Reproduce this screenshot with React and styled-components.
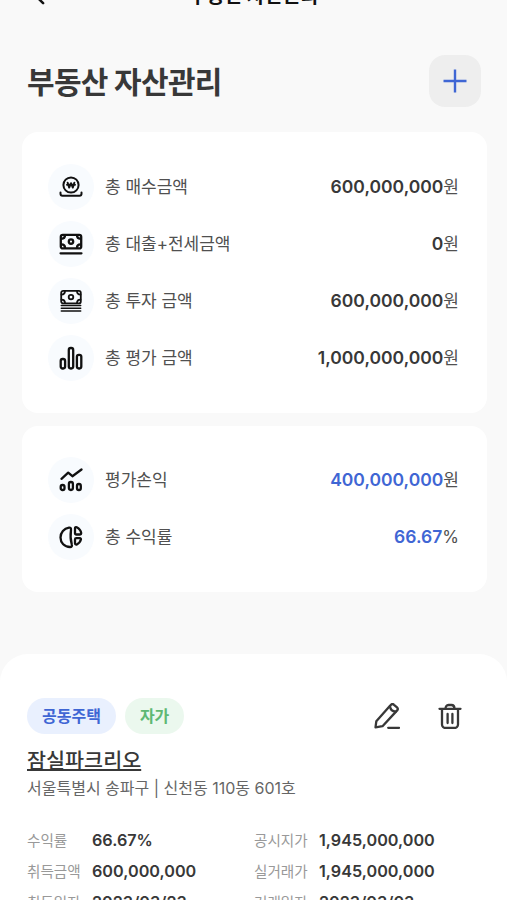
import React from "react";
import styled, { createGlobalStyle } from "styled-components";

const colors = {
  background: "#f9f9f9",
  text: "#383838",
  label: "#505050",
  blue: "#3f66d4",
  green: "#5fb873",
};

const summary = [
  { icon: "won", label: "총 매수금액", value: "600,000,000", unit: "원" },
  { icon: "loan", label: "총 대출+전세금액", value: "0", unit: "원" },
  { icon: "invest", label: "총 투자 금액", value: "600,000,000", unit: "원" },
  { icon: "bars", label: "총 평가 금액", value: "1,000,000,000", unit: "원" },
];

const profit = [
  { icon: "trend", label: "평가손익", value: "400,000,000", unit: "원" },
  { icon: "pie", label: "총 수익률", value: "66.67", unit: "%" },
];

const details = [
  ["수익률", "66.67%"],
  ["공시지가", "1,945,000,000"],
  ["취득금액", "600,000,000"],
  ["실거래가", "1,945,000,000"],
  ["취득일자", "2023/03/23"],
  ["거래일자", "2023/03/03"],
];

const icons = {
  won: (
    <>
      <circle cx="12" cy="10" r="7.600" strokeWidth="2" />
      <path d="M8.600 7.600l1.600 5L12 8.200l1.800 4.400 1.600-5M8 9.800h8" strokeWidth="1.900" />
      <path d="M1.500 17.500v1.200a2 2 0 0 0 2 2h17a2 2 0 0 0 2-2v-1.200" />
    </>
  ),
  loan: (
    <>
      <rect x="1.800" y="2.800" width="20.400" height="13.600" rx="2" strokeWidth="2.300" />
      <circle cx="12" cy="9.600" r="2.200" strokeWidth="2.300" />
      <path
        d="M2.500 6.800c2 0 3.500-1.500 3.500-3.500M21.500 6.800c-2 0-3.500-1.500-3.500-3.500M2.500 12.400c2 0 3.500 1.500 3.500 3.500M21.500 12.400c-2 0-3.500 1.500-3.500 3.500"
        strokeWidth="2.300"
      />
      <path d="M1.500 21.300h21" strokeWidth="2.200" />
    </>
  ),
  invest: (
    <g strokeWidth="1.800">
      <rect x="2.200" y="1.800" width="19.600" height="12.600" rx="2" />
      <circle cx="12" cy="8.100" r="2.300" />
      <path d="M2.500 5.600c2 0 3.500-1.500 3.500-3.500M21.500 5.600c-2 0-3.500-1.500-3.500-3.500M2.500 10.600c2 0 3.500 1.500 3.500 3.500M21.500 10.600c-2 0-3.500 1.500-3.500 3.500" />
      <path d="M2.300 16.500h19.400M2.300 19.300h19.400M2.300 22h19.400" strokeWidth="1.500" />
    </g>
  ),
  bars: (
    <g strokeWidth="2.300">
      <rect x="1.700" y="13" width="4.400" height="9.500" rx="1.900" />
      <rect x="9.800" y="2" width="4.400" height="20.500" rx="1.900" />
      <rect x="17.900" y="8.800" width="4.400" height="13.700" rx="1.900" />
    </g>
  ),
  trend: (
    <g strokeWidth="2.300">
      <path d="M2.500 10.800L9.200 4.600l4.200 3.600L22.500 1.500" />
      <rect x="1.700" y="17" width="3.800" height="5" rx="1.800" />
      <rect x="9.900" y="14" width="4" height="8" rx="1.900" />
      <rect x="18" y="16" width="3.800" height="6" rx="1.800" />
    </g>
  ),
  pie: (
    <g strokeWidth="2.300">
      <path d="M10 2.600C5 3.400 1.500 7.500 1.500 12.500c0 5.300 4 9.500 9.500 9.500 1.700 0 2.300-1 1.800-2.500-1.400-4.800-1.500-9.800-.8-14.700.2-1.500-.6-2.400-2-2.200z" />
      <path d="M16 3.300c0-1 .8-1.500 1.700-1.100 2.400 1.200 4.200 3.300 4.500 6 0 .8-.5 1.300-1.200 1.300h-3.700c-.8 0-1.300-.5-1.300-1.300z" />
      <path d="M16 14.500c0-.8.500-1.300 1.300-1.300h3.500c.9 0 1.300.7 1.100 1.400a7 7 0 0 1-4 4.800c-1.100.4-1.900-.1-1.900-1.100z" />
    </g>
  ),
};

const AssetRow = ({ icon, label, value, unit, highlight }) => (
  <Row>
    <IconCircle>
      <Icon viewBox="0 0 24 24">{icons[icon]}</Icon>
    </IconCircle>
    <RowLabel>{label}</RowLabel>
    <Amount $highlight={highlight}>
      {value}
      <Unit>{unit}</Unit>
    </Amount>
  </Row>
);

const App = () => {
  return (
    <Page>
      <GlobalStyle />
      <TopBar>
        <BackButton aria-label="back">
          <BackIcon viewBox="0 0 12 20">
            <path d="M10 2L2 10l8 8" />
          </BackIcon>
        </BackButton>
        <TopTitle>부동산 자산관리</TopTitle>
      </TopBar>

      <Heading>
        <Title>부동산 자산관리</Title>
        <AddButton aria-label="add">
          <AddIcon viewBox="0 0 24 24">
            <path d="M12 .5v23M.5 12h23" />
          </AddIcon>
        </AddButton>
      </Heading>

      <Cards>
        <Card>
          {summary.map((item) => (
            <AssetRow key={item.label} {...item} />
          ))}
        </Card>
        <Card>
          {profit.map((item) => (
            <AssetRow key={item.label} {...item} highlight />
          ))}
        </Card>
      </Cards>

      <Sheet>
        <SheetHeader>
          <Badge $color={colors.blue} $background="#e9f0fe">
            공동주택
          </Badge>
          <Badge $color={colors.green} $background="#ebf8ee">
            자가
          </Badge>
          <Actions>
            <ActionButton aria-label="edit">
              <ActionIcon viewBox="0 0 26 26">
                <path d="M1.500 24.300l.8-6L15.800 3l1.200-1.200a2.200 2.200 0 0 1 3 0l3 2.600a2.200 2.200 0 0 1 .2 3L22 8.600 8.500 23.200z" />
                <path d="M16 3.200c.2 3 2.200 5.200 5.800 5.500M14.200 24.800H25" />
              </ActionIcon>
            </ActionButton>
            <ActionButton aria-label="delete">
              <ActionIcon viewBox="0 0 26 26">
                <path d="M2.500 5.800h21M5 5.800v15.700a3.500 3.500 0 0 0 3.500 3.500h9a3.500 3.500 0 0 0 3.500-3.500V5.800M8.500 5.800c0-2.200 1-3.800 3-3.800h3c2 0 3 1.600 3 3.800M10.600 11v9M15.400 11v9" />
              </ActionIcon>
            </ActionButton>
          </Actions>
        </SheetHeader>
        <PropertyName href="#">잠실파크리오</PropertyName>
        <Address>서울특별시 송파구 | 신천동 110동 601호</Address>
        <Details>
          {details.map(([label, value]) => (
            <Detail key={label}>
              <DetailLabel>{label}</DetailLabel>
              <DetailValue>{value}</DetailValue>
            </Detail>
          ))}
        </Details>
      </Sheet>
    </Page>
  );
};

const GlobalStyle = createGlobalStyle`
  * {
    box-sizing: border-box;
  }

  body {
    margin: 0;
    font-family: Inter, "Noto Sans CJK KR", sans-serif;
    color: ${colors.text};
  }

  button {
    padding: 0;
    border: none;
    background: none;
  }
`;

const Page = styled.div`
  display: flex;
  flex-direction: column;
  height: 900px;
  overflow: hidden;
  background-color: ${colors.background};
`;

const TopBar = styled.header`
  display: grid;
  grid-template-columns: 60px 1fr 60px;
  align-items: center;
  flex-shrink: 0;
  height: 44px;
  margin-top: -26px;
  color: #111111;
`;

const BackButton = styled.button`
  display: flex;
  padding-left: 34px;
  color: inherit;
`;

const BackIcon = styled.svg`
  width: 11px;
  height: 18px;
  fill: none;
  stroke: currentColor;
  stroke-width: 2.8;
  stroke-linecap: round;
`;

const TopTitle = styled.div`
  font-size: 19.5px;
  font-weight: 700;
  line-height: 24px;
  letter-spacing: -0.1px;
  text-align: center;
`;

const Heading = styled.div`
  display: flex;
  align-items: center;
  justify-content: space-between;
  margin-top: 37px;
  padding: 0 26px 0 27px;
`;

const Title = styled.h1`
  margin: 0;
  padding-top: 1px;
  font-size: 30px;
  font-weight: 700;
  line-height: 40px;
  letter-spacing: -0.7px;
`;

const AddButton = styled.button`
  display: flex;
  align-items: center;
  justify-content: center;
  width: 52px;
  height: 52px;
  border-radius: 16px;
  background-color: #eeeeee;
  color: ${colors.blue};
`;

const AddIcon = styled.svg`
  width: 24px;
  height: 24px;
  fill: none;
  stroke: currentColor;
  stroke-width: 2.4;
`;

const Cards = styled.div`
  display: flex;
  flex-direction: column;
  gap: 13px;
  margin-top: 25px;
  padding: 0 20px 0 22px;
`;

const Card = styled.section`
  display: flex;
  flex-direction: column;
  gap: 11px;
  padding: 32px 28px 32px 26px;
  border-radius: 16px;
  background-color: #ffffff;

  & + & {
    padding-top: 31px;
  }
`;

const Row = styled.div`
  display: flex;
  align-items: center;
  height: 46px;
`;

const IconCircle = styled.div`
  display: flex;
  align-items: center;
  justify-content: center;
  width: 46px;
  height: 46px;
  margin-right: 11px;
  border-radius: 50%;
  background-color: #f8fbfe;
`;

const Icon = styled.svg`
  width: 24px;
  height: 24px;
  fill: none;
  stroke: #111111;
  stroke-width: 2;
  stroke-linecap: round;
  stroke-linejoin: round;
`;

const RowLabel = styled.span`
  color: ${colors.label};
  font-size: 17px;
  line-height: 24px;
`;

const Amount = styled.span`
  margin-left: auto;
  color: ${(props) => (props.$highlight ? colors.blue : colors.text)};
  font-size: 17.5px;
  font-weight: 600;
  line-height: 24px;
`;

const Unit = styled.span`
  color: ${colors.label};
  font-size: 17px;
  font-weight: 400;
`;

const Sheet = styled.section`
  flex: 1 0 auto;
  margin-top: 62px;
  padding: 44px 27px 0;
  border-radius: 28px 28px 0 0;
  background-color: #ffffff;
`;

const SheetHeader = styled.div`
  display: flex;
  align-items: center;
  gap: 9px;
  height: 36px;
`;

const Badge = styled.span`
  padding: 0 15px;
  border-radius: 18px;
  background-color: ${(props) => props.$background};
  color: ${(props) => props.$color};
  font-size: 16px;
  font-weight: 700;
  line-height: 36px;
`;

const Actions = styled.div`
  display: flex;
  gap: 37px;
  margin-left: auto;
  padding-right: 17px;
`;

const ActionButton = styled.button`
  display: flex;
  color: ${colors.text};
`;

const ActionIcon = styled.svg`
  width: 26px;
  height: 26px;
  fill: none;
  stroke: currentColor;
  stroke-width: 2.3;
  stroke-linecap: round;
  stroke-linejoin: round;
`;

const PropertyName = styled.a`
  display: block;
  width: fit-content;
  margin-top: 11px;
  color: ${colors.text};
  font-size: 20.7px;
  font-weight: 500;
  line-height: 32px;
  text-decoration: underline;
  text-decoration-thickness: 1.5px;
`;

const Address = styled.p`
  margin: 0;
  color: #666666;
  font-size: 16px;
  line-height: 22px;
`;

const Details = styled.div`
  display: grid;
  grid-template-columns: 227px 1fr;
  margin-top: 25px;
`;

const Detail = styled.div`
  display: flex;
  align-items: center;
  height: 31px;
`;

const DetailLabel = styled.span`
  width: 65px;
  color: #999999;
  font-size: 14.6px;
`;

const DetailValue = styled.span`
  font-size: 16.2px;
  font-weight: 600;
`;

export default App;
